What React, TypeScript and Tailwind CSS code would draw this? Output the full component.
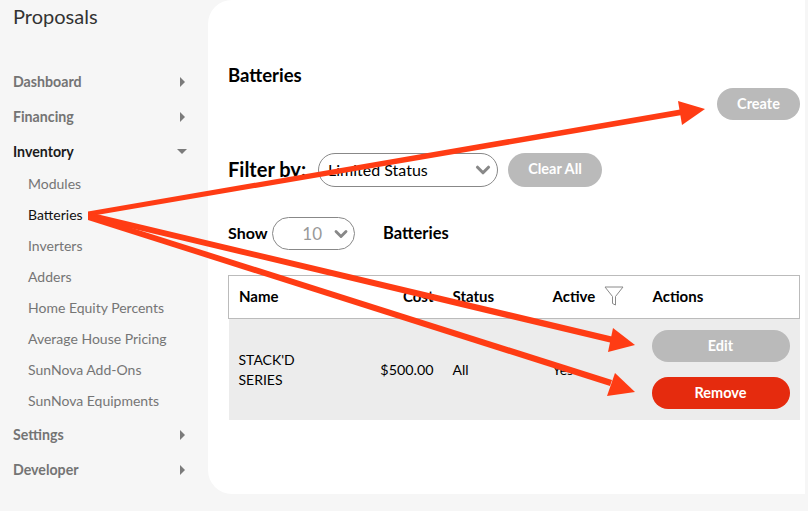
import { ChevronDown } from 'lucide-react';

const subItems = ['Modules', 'Batteries', 'Inverters', 'Adders', 'Home Equity Percents', 'Average House Pricing', 'SunNova Add-Ons', 'SunNova Equipments'];

function NavRow({ label, open }: { label: string; open?: boolean }) {
  return (
    <div className={`flex h-[35px] items-center justify-between pl-[13px] pr-[23px] text-[14.2px] font-bold ${open ? 'text-[#1c1c1c]' : 'text-[#747474]'}`}>
      <span>{label}</span>
      {open ? (
        <span className="mr-[-2px] h-0 w-0 border-x-[5px] border-t-[5px] border-x-transparent border-t-[#7b7b7b]" />
      ) : (
        <span className="h-0 w-0 border-y-[5px] border-l-[5px] border-y-transparent border-l-[#7b7b7b]" />
      )}
    </div>
  );
}

function Sidebar() {
  return (
    <aside className="w-[208px] shrink-0">
      <div className="pl-[13px] pt-[2px] text-[20px] leading-[28px] text-[#333]">Proposals</div>
      <nav className="mt-[34px]">
        <NavRow label="Dashboard" />
        <NavRow label="Financing" />
        <NavRow label="Inventory" open />
        <ul className="mt-[-1px] pb-[1px]">
          {subItems.map((item) => (
            <li key={item} className={`flex h-[31px] items-center pl-[28px] text-[14px] ${item === 'Batteries' ? 'text-[#111]' : 'text-[#757575]'}`}>
              {item}
            </li>
          ))}
        </ul>
        <NavRow label="Settings" />
        <NavRow label="Developer" />
      </nav>
    </aside>
  );
}

function Arrows() {
  return (
    <svg className="absolute left-0 top-0" width="808" height="511" fill="#ff3c14" stroke="none">
      <polygon points="88,211.5 680,109.5 682,115 88,216.5" />
      <polygon points="678,101 705,109 682,125" />
      <polygon points="88,212 614,337 612,343 88,218" />
      <polygon points="613,328 635,345 608,352" />
      <polygon points="88,214 612,380 610,386 88,220" />
      <polygon points="615,373 635,392 607,396" />
    </svg>
  );
}

export default function App() {
  return (
    <div className="relative flex h-[511px] w-[808px] overflow-hidden bg-[#f6f6f6] font-['Lato','Carlito','Liberation_Sans',sans-serif] text-black">
      <Sidebar />
      <main className="mb-[17px] w-[597px] rounded-l-[24px] rounded-tr-none bg-white pl-[20px] pr-[5px]">
        <h2 className="pt-[64px] text-[18.5px] font-bold leading-[22px]">Batteries</h2>
        <div className="mt-[2px] flex justify-end">
          <button className="h-[32px] w-[83px] rounded-full bg-[#bababa] text-[14.5px] font-bold text-white">Create</button>
        </div>
        <div className="mt-[33px] flex h-[34px] items-center">
          <span className="w-[90px] pb-[3px] text-[20px] font-bold">Filter by:</span>
          <div className="flex h-[34px] w-[180px] items-center justify-between rounded-full border border-[#888] pl-[9px] pr-[3px] text-[16px]">
            <span>Limited Status</span>
            <ChevronDown className="h-[22px] w-[22px] text-[#888]" strokeWidth={3.4} />
          </div>
          <button className="ml-[10px] h-[34px] w-[94px] rounded-full bg-[#bababa] pb-[2px] text-[14.5px] font-bold text-white">Clear All</button>
        </div>
        <div className="mt-[30px] flex h-[33px] items-center">
          <span className="w-[44px] pb-[1px] text-[16px] font-bold">Show</span>
          <div className="flex h-[33px] w-[83px] items-center justify-end rounded-full border border-[#888] pr-[3px] text-[17px] text-[#999]">
            <span className="mr-[9px]">10</span>
            <ChevronDown className="h-[20px] w-[20px] text-[#888]" strokeWidth={3.4} />
          </div>
          <span className="ml-[28px] text-[16.5px] font-bold">Batteries</span>
        </div>
        <table className="mt-[25px] w-[572px] table-fixed border-collapse text-[14px]">
          <thead>
            <tr className="h-[43px] border border-[#bbb] text-left text-[15px] font-bold">
              <th className="w-[119px] pb-[2px] pl-[10px]">Name</th>
              <th className="w-[105px] pb-[2px] pr-[19px] text-right">Cost</th>
              <th className="w-[100px] pb-[2px]">Status</th>
              <th className="w-[99px] pb-[2px]">
                <span className="flex items-center">
                  Active
                  <svg className="ml-[9px]" width="20" height="20" viewBox="0 0 20 20" fill="none" stroke="#8a8a8a" strokeWidth="1">
                    <path d="M1 1 H19 L11.5 10.5 V19 L8.5 17.5 V10.5 Z" />
                  </svg>
                </span>
              </th>
              <th className="pb-[2px] pl-[1px]">Actions</th>
            </tr>
          </thead>
          <tbody>
            <tr className="h-[101px] bg-[#ececec]">
              <td className="pl-[10px] pt-[2px] leading-[20px]">
                STACK'D
                <br />
                SERIES
              </td>
              <td className="pr-[19px] text-right text-[14.3px]">$500.00</td>
              <td>All</td>
              <td>Yes</td>
              <td>
                <div className="flex w-[138px] flex-col gap-[15px]">
                  <button className="h-[32px] rounded-full bg-[#bababa] text-[14.5px] font-bold text-white">Edit</button>
                  <button className="h-[32px] rounded-full bg-[#e52b0e] text-[14.5px] font-bold text-white">Remove</button>
                </div>
              </td>
            </tr>
          </tbody>
        </table>
      </main>
      <Arrows />
    </div>
  );
}
